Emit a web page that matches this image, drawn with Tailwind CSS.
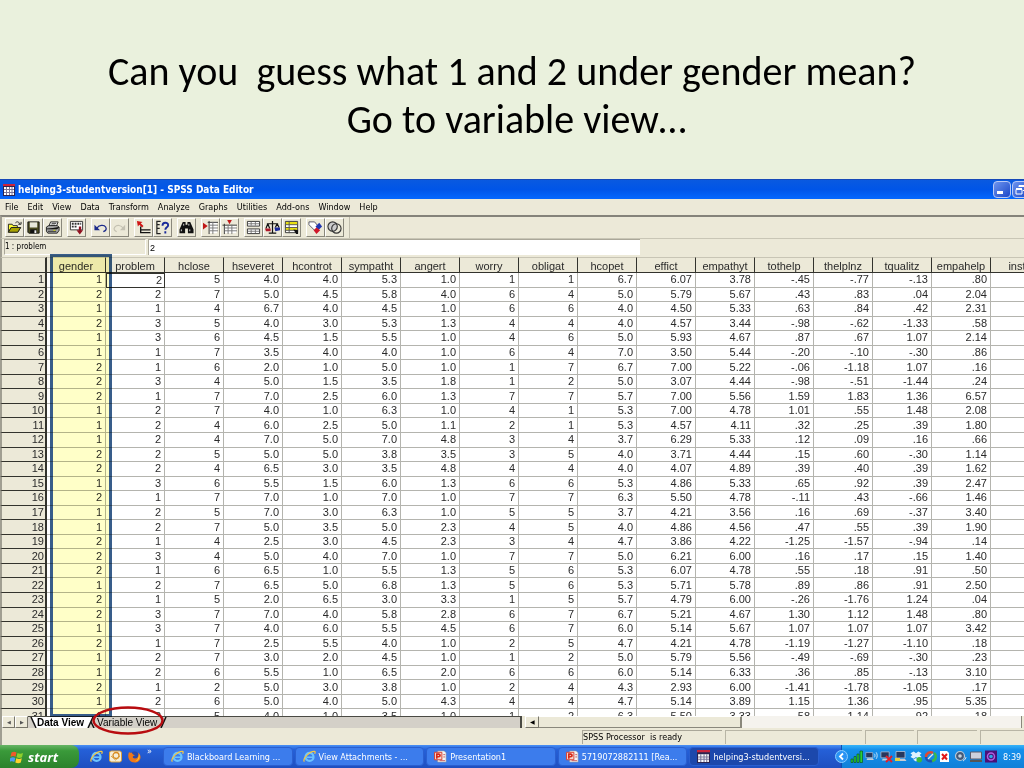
<!DOCTYPE html>
<html lang="en">
<head>
<meta charset="utf-8">
<title>SPSS Data Editor</title>
<script src="https://cdn.jsdelivr.net/npm/@tailwindcss/browser@4"></script>
</head>
<body class="bg-[#eaf1dd] min-h-screen flex flex-col overflow-hidden text-black font-['DejaVu_Sans_Condensed','DejaVu_Sans',sans-serif] text-[9px] leading-3">

<h1 class="h-[179px] pt-12 shrink-0 text-center text-[40px] leading-12 font-['Carlito','Lato',sans-serif] whitespace-pre">Can you  guess what 1 and 2 under gender mean?
 Go to variable view…</h1>

<main class="bg-[#ece9d8] flex flex-col flex-1">
  <header class="h-5 shrink-0 flex items-center pl-[3px] bg-linear-to-b from-[#0a5ae0] via-[#0055e8] to-[#0568ff] border-t border-[#1749b8] text-white font-bold text-[10px] overflow-hidden">
    <svg class="w-3 h-3 mr-[3px] shrink-0" viewBox="0 0 12 12"><path fill="#2b2350" d="M0 0h12v12H0z"/><path fill="#c9243c" d="M0 0h12v2H0z"/><path fill="#fff" d="M1 3h10v8H1z"/><path stroke="#7a7598" d="M1 5.500h10M1 8.500h10M3.500 3v8M6.500 3v8M9 3v8"/></svg>
    <span class="whitespace-nowrap">helping3-studentversion[1] - SPSS Data Editor</span>
    <div class="ml-auto -mr-[6px] flex gap-px shrink-0">
      <button aria-label="Minimize" class="w-[18px] h-[17px] rounded-sm border border-[#b9c9f5] bg-linear-to-br from-[#6e93ee] to-[#1c45c8] flex items-end p-[3px]"><span class="block w-[6px] h-[3px] bg-white"></span></button>
      <button aria-label="Restore" class="w-[18px] h-[17px] rounded-sm border border-[#b9c9f5] bg-linear-to-br from-[#6e93ee] to-[#1c45c8]"><svg class="w-4 h-[15px]" viewBox="0 0 16 15" fill="none" stroke="#fff"><path d="M6 5V3.500h6v5h-2M3 7.500h6v4.500H3zM3 6.500h6M6 4.500h6"/></svg></button>
    </div>
  </header>

  <nav class="h-4 shrink-0 flex items-center gap-[9px] pl-[5px]">
    <a href="#">File</a><a href="#">Edit</a><a href="#">View</a><a href="#">Data</a><a href="#">Transform</a><a href="#">Analyze</a><a href="#">Graphs</a><a href="#">Utilities</a><a href="#">Add-ons</a><a href="#">Window</a><a href="#">Help</a>
  </nav>

  <div id="tools" class="h-6 shrink-0 flex items-center gap-[5px] pl-[3px] border-t-2 border-b border-l-2 border-t-[#85837a] border-b-[#c9c6b6] border-l-[#a09e92]">
    <div class="flex">
      <button aria-label="Open"><svg viewBox="0 0 16 16"><path fill="#ff3" stroke="#222" d="M1.500 13V4.500h4l1 1.500H11v2M1.500 13l3-5h10l-3 5z"/><path fill="#a9a300" stroke="#222" d="M1.500 13l3-5h10l-3 5z"/><path fill="none" stroke="#222" d="M9 3c2-2 4-1 4.500 1.500M12 4.500h3V2"/></svg></button>
      <button aria-label="Save"><svg viewBox="0 0 16 16"><path fill="#4b4b20" stroke="#111" d="M2 2h12v12H3l-1-1z"/><path fill="#e8e8dc" d="M4 2.500h8V8H4z"/><path fill="#111" d="M4.500 10h7v4h-7z"/><path fill="#eee" d="M9 11h2v3H9z"/></svg></button>
      <button aria-label="Print"><svg viewBox="0 0 16 16"><path fill="#fff" stroke="#222" d="M4 7l2-5h8l-2 5z"/><path fill="#aaa" stroke="#222" d="M1.500 7.500L4 6h9l2 1.500V11l-2 3H3l-1.500-2z"/><path stroke="#222" d="M1.500 9.500H13l2-2M7 3.500h5M6 5.500h5M3 12h9"/><path stroke="#dd0" d="M9 11h2"/></svg></button>
    </div>
    <div class="flex">
      <button aria-label="Recall dialog"><svg viewBox="0 0 16 16"><path fill="#fff" stroke="#333" d="M1.500 1.500h13v9h-13z"/><path stroke="#333" stroke-width="2" stroke-dasharray="2 1" d="M3 4h10M3 7h6"/><path fill="#901020" d="M10.500 7h2.500v4h2l-3.500 4.500L8 11h2.500z"/></svg></button>
    </div>
    <div class="flex">
      <button aria-label="Undo"><svg viewBox="0 0 16 16"><path fill="none" stroke="#1c2a8a" stroke-width="1.400" d="M4 9c2-4 8-4 9.500-1.500s0 4-2.500 5"/><path fill="#1c2a8a" d="M1.500 5v6h6z"/></svg></button>
      <button aria-label="Redo"><svg viewBox="0 0 16 16"><path fill="none" stroke="#c4c1b2" stroke-width="1.200" d="M12 9C10 5 5 5 3 7.500s0 4 2 5"/><path fill="#c4c1b2" d="M14 5v6H8.500z"/></svg></button>
    </div>
    <div class="flex">
      <button aria-label="Go to case"><svg viewBox="0 0 16 16"><path fill="#d01515" d="M1 1l6 1-2 1.500 3 3-1.500 1.500-3-3L2 7z"/><path fill="none" stroke="#111" stroke-width="1.400" d="M5 7v6.500h10.500M5 10.500h10.500"/></svg></button>
      <button aria-label="Variables"><svg viewBox="0 0 16 16"><path fill="none" stroke="#222" stroke-width="1.300" d="M6 1.500H2v13h4M2 5h3M2 9h3"/><path fill="none" stroke="#1a2a9a" stroke-width="2" d="M8 6c0-4 6-4 6-.5 0 2.500-3 2-3 5M11 12v2.500"/></svg></button>
    </div>
    <div class="flex">
      <button aria-label="Find"><svg viewBox="0 0 16 16"><path fill="#111" d="M4 2h3v3h2V2h3l3.500 8v4H9.500V9h-3v5H.500v-4z"/><path stroke="#ddd" d="M2.500 10v2M11.500 10v2M5 4v2M10.500 4v2"/></svg></button>
    </div>
    <div class="flex">
      <button aria-label="Insert case"><svg viewBox="0 0 16 16"><path fill="#fff" d="M7 2h8v12H7z"/><path fill="none" stroke="#333" d="M6.500 1v14M5 2.500h11"/><path fill="none" stroke="#777" d="M7 5.500h9M7 8.500h9M7 11.500h9M10.500 2v13"/><path fill="#c01818" d="M0 3l5 3.500L0 10z"/></svg></button>
      <button aria-label="Insert variable"><svg viewBox="0 0 16 16"><path fill="#fff" d="M2 6h13v8H2z"/><path fill="none" stroke="#333" d="M.500 5.500H16M2.500 4v11"/><path fill="none" stroke="#777" d="M6.500 5v10M10.500 5v10M3 8.500h13M3 11.500h13"/><path fill="#c01818" d="M5.500 0h5L8 4.500z"/></svg></button>
    </div>
    <div class="flex">
      <button aria-label="Split file"><svg viewBox="0 0 16 16"><path fill="#fff" stroke="#333" d="M1.500 1.500h13v5h-13zM1.500 9.500h13v5h-13z"/><path stroke="#777" d="M5.500 2v4M10 2v4M5.500 10v4M10 10v4M2 4h12M2 12h12"/></svg></button>
      <button aria-label="Weight cases"><svg viewBox="0 0 16 16"><path fill="none" stroke="#111" stroke-width="1.300" d="M8 1v13M2 4h12M4 14h8M3 4L1 9M3 4l2 5M13 4l-2 4M13 4l2 4"/><path fill="#b01828" d="M0 9h6v3H1z"/><path fill="#1c2a9a" d="M10 8h6v3l-5 1z"/></svg></button>
      <button aria-label="Select cases"><svg viewBox="0 0 16 16"><path fill="#fff" stroke="#333" d="M1.500 1.500h13v12h-13z"/><path fill="#e8e010" d="M2 2h12v3H2zM2 8h12v3H2z"/><path stroke="#555" d="M5.500 1v13M1 5h14M1 8h14M1 11h14"/><path fill="#111" d="M10 10l5 1v4h-2z"/></svg></button>
    </div>
    <div class="flex">
      <button aria-label="Value labels"><svg viewBox="0 0 16 16"><path fill="#fff" stroke="#556" d="M1 2h6l5 6-4 4-7-7z"/><path fill="#2338b0" d="M8 7l4-4 3 4-4 4z"/><path fill="#d0182a" d="M6 11l3-3 4 3-4 4z"/></svg></button>
      <button aria-label="Use sets"><svg viewBox="0 0 16 16" fill="#ccc" stroke="#333" stroke-width="1.200"><circle cx="6" cy="7" r="5"/><circle cx="10" cy="9" r="5" fill="none"/></svg></button>
    </div>
    <div class="w-px self-stretch bg-[#c0bdad]"></div>
  </div>

  <div class="h-[18px] shrink-0 flex items-start pl-[2px] border-l-2 border-[#a09e92] text-[8px]">
    <label for="cell" class="w-[142px] h-4 pt-px border border-t-[#aaa799] border-l-[#aaa799] border-b-white border-r-white">1 : problem</label>
    <input id="cell" value="2" class="ml-[2px] w-[492px] h-4 bg-white border-t border-l border-[#aaa799] text-[9px] leading-3 pl-px font-['Liberation_Sans',sans-serif]">
  </div>

  <section class="relative shrink-0">
    <div class="h-[459px] overflow-hidden bg-white">
      <table class="table-fixed w-[1050px] h-[467px] border-separate border-spacing-0 font-['Liberation_Sans',sans-serif] text-[11px] leading-[13px] text-[#2a2a2a]">
        <thead><tr id="head"></tr></thead>
        <tbody id="rows"></tbody>
      </table>
    </div>
    <div class="absolute left-[50px] -top-[3px] bottom-[11px] w-[62px] border-3 border-[#385d8a] bg-[#ffffc8] mix-blend-multiply"></div>

    <div class="h-3 flex items-stretch text-[9px] font-['Liberation_Sans',sans-serif] border-l-2 border-[#a09e92]">
      <button aria-label="Previous sheet" class="w-[13px] border border-white border-r-[#77756a] border-b-[#77756a] text-[5px] leading-[9px] text-[#555]">◀</button>
      <button aria-label="Next sheet" class="w-[13px] border border-white border-r-[#77756a] border-b-[#77756a] text-[5px] leading-[9px] text-[#555]">▶</button>
      <div class="flex-none w-[494px] bg-[#d4d0c8] border-t border-r-2 border-[#4a4a44] flex leading-[11px]">
        <svg class="w-[9px] h-[11px] shrink-0" viewBox="0 0 9 11"><path fill="#fff" d="M3 0h6v11H7z"/><path stroke="#111" stroke-width="1.500" d="M3 0l5 11"/></svg>
        <button class="bg-white font-bold text-[10px] whitespace-nowrap">Data View</button>
        <svg class="w-[13px] h-[11px] shrink-0" viewBox="0 0 13 11"><path fill="#fff" d="M0 0h9L4 11H0z"/><path stroke="#111" stroke-width="1.500" d="M9 0L4 11M7 5l3 6"/></svg>
        <button class="text-[10px] whitespace-nowrap">Variable View</button>
        <svg class="w-3 h-[11px] shrink-0" viewBox="0 0 12 11"><path stroke="#111" stroke-width="1.500" d="M9 0L4 11"/></svg>
      </div>
      <button aria-label="Scroll left" class="ml-[3px] w-[14px] border border-white border-r-[#77756a] border-b-[#77756a] text-[6px] leading-[9px]">◀</button>
      <div class="w-[203px] border-t border-r-2 border-b border-t-white border-[#8a887c]"></div>
      <div class="flex-1 bg-[#f5f3ee]"></div>
      <div class="w-[3px] border-l border-[#8a887c]"></div>
    </div>
    <svg class="absolute left-[91px] top-[448px] w-[74px] h-[31px]" viewBox="0 0 74 31" fill="none"><ellipse cx="37" cy="15.500" rx="34.500" ry="13" stroke="#b80c10" stroke-width="2.500"/></svg>
  </section>

  <footer class="flex-1 pt-[2px] pb-px flex gap-[3px] border-l-2 border-[#a09e92] whitespace-pre">
    <div class="w-[577px]"></div>
    <div class="w-[140px] border-l border-t border-[#aaa799]">SPSS Processor  is ready</div>
    <div class="w-[137px] border-l border-t border-[#b8b5a5]"></div>
    <div class="w-[49px] border-l border-t border-[#b8b5a5]"></div>
    <div class="w-[60px] border-l border-t border-[#b8b5a5]"></div>
    <div class="flex-1 border-l border-t border-[#b8b5a5]"></div>
  </footer>
</main>

<svg class="hidden">
  <symbol id="ie" viewBox="0 0 14 14"><circle cx="7" cy="7.500" r="4.300" fill="none" stroke="#6cc4ff" stroke-width="2.400"/><path stroke="#6cc4ff" stroke-width="1.800" d="M4 7.800h7"/><path fill="none" stroke="#f5c842" stroke-width="1.300" d="M1.500 12.500C-1 10 7 1 12.500 1.500c1 .3.500 1.500 0 2.500"/></symbol>
  <symbol id="ppt" viewBox="0 0 14 14"><path fill="#f4f4f4" stroke="#999" stroke-width=".6" d="M4 1h7l2 2v10H4z"/><path stroke="#c55" d="M10 5h2M10 7.500h2M6 11.500h6"/><path fill="#f4d8d0" stroke="#d83a28" d="M.500 2.500h8v8h-8z"/><path fill="none" stroke="#d82818" stroke-width="1.800" d="M3 9.500v-5h2c2 0 2 2.800 0 2.800H3"/></symbol>
  <symbol id="spss" viewBox="0 0 12 12"><path fill="#2b2350" d="M0 0h12v12H0z"/><path fill="#c9243c" d="M0 0h12v2H0z"/><path fill="#fff" d="M1 4h10v7H1z"/><path stroke="#7a7598" d="M1 6.500h10M1 8.500h10M3.500 4v7M6.500 4v7M9 4v7"/></symbol>
  <symbol id="pc" viewBox="0 0 12 12"><path fill="#26385e" stroke="#b8c4d8" stroke-width=".8" d="M1 1.500h9v6.500H1z"/><path fill="#c8ccd4" d="M3 9h7l1.500 2H2z"/></symbol>
</svg>

<div class="h-[23px] shrink-0 flex items-stretch bg-linear-to-b from-[#4a90f5] via-[#2560d8] via-20% to-[#1e4fc0] text-white">
  <button class="w-[79px] shrink-0 rounded-r-lg bg-linear-to-b from-[#67b565] via-[#3a9a3a] via-25% to-[#2c822c] flex items-center pl-[10px] gap-1 font-bold italic text-[13px] font-['Open_Sans',sans-serif]">
    <svg class="w-[14px] h-[14px]" viewBox="0 0 14 14"><path fill="#f0592a" d="M1.500 2.500c2-1.300 3.500-1 5 0l-1 4.200c-1.500-.8-3-.9-5 0z"/><path fill="#8ed02c" d="M7.500 3c2 1 3.500 1 5.500 0l-1 4.200c-2 1-3.500.8-5.500 0z"/><path fill="#4a9af5" d="M.300 8c2-1 3.500-.8 5 0l-1 4c-1.500-1-3-1-5 0z"/><path fill="#fbd22c" d="M6.300 8.300c2 1 3.500 1 5.500 0l-1 4.200c-2 1-3.500.8-5.500 0z"/></svg>start
  </button>
  <div class="w-[84px] shrink-0 flex items-center pl-[11px] gap-[6px]">
    <svg class="w-[13px] h-[13px]"><use href="#ie"/></svg>
    <svg class="w-[13px] h-[13px]" viewBox="0 0 13 13"><rect x=".5" y="1" width="12" height="11" rx="2" fill="#f6eed8" stroke="#d8a040"/><circle cx="7" cy="5.500" r="3" fill="none" stroke="#d88a20" stroke-width="1.300"/><path fill="none" stroke="#d8a040" d="M2 6l4.500 4L11 6"/></svg>
    <svg class="w-[13px] h-[13px]" viewBox="0 0 13 13"><circle cx="6.500" cy="6.500" r="5" fill="#2a4aa8"/><path fill="#f07818" d="M1 2c1 1 2 1 3 .5 0 2 2 2 3 3-3 0-3 3 0 3s4-3 3-6c5 4 2 10-3.500 10S-1 7 1 2z"/><path fill="#fbc52c" d="M11 4c2 4-1 7.500-4.500 7.500 3-1 4.500-4 4.500-7.500z"/></svg>
    <span class="self-start">»</span>
  </div>
  <div id="tasks" class="flex-1 min-w-0 flex gap-[2px] py-[2px] pr-[22px]">
    <button class="bg-[#3c7cec]"><svg><use href="#ie"/></svg><span>Blackboard Learning ...</span></button>
    <button class="bg-[#3c7cec]"><svg><use href="#ie"/></svg><span>View Attachments - ...</span></button>
    <button class="bg-[#3c7cec]"><svg><use href="#ppt"/></svg><span>Presentation1</span></button>
    <button class="bg-[#3c7cec]"><svg><use href="#ppt"/></svg><span>5719072882111 [Rea...</span></button>
    <button class="bg-[#1c48ac]"><svg><use href="#spss"/></svg><span>helping3-studentversi...</span></button>
  </div>
  <div class="w-[183px] shrink-0 flex items-center gap-[2px] bg-linear-to-b from-[#36b4f8] via-[#1590ec] via-20% to-[#1180d8] border-l border-[#0d4fb0]">
    <svg class="w-[13px] h-[13px] -ml-[7px] shrink-0" viewBox="0 0 13 13"><circle cx="6.500" cy="6.500" r="6" fill="#2a94f4" stroke="#8accff"/><path fill="none" stroke="#fff" stroke-width="1.800" d="M8 3.500l-3 3 3 3"/></svg>
    <svg class="w-[13px] h-[13px] shrink-0" viewBox="0 0 13 13"><path fill="#28d038" stroke="#064a14" stroke-width=".6" d="M1 9h2v3.500H1zM4 6.500h2v6H4zM7 4h2v8.500H7zM10 1h2.500v11.500H10z"/></svg>
    <svg class="w-[13px] h-[13px] shrink-0" viewBox="0 0 14 12"><use href="#pc" width="10" height="11"/><path fill="none" stroke="#fff" stroke-width=".8" d="M10 3c1 1 1 3 0 4M12 1.500c1.500 2 1.500 5 0 7"/></svg>
    <svg class="w-[13px] h-[13px] shrink-0" viewBox="0 0 13 13"><use href="#pc" width="11" height="12"/><path stroke="#e0202c" stroke-width="2" d="M6 6l6 6M12 6l-6 6"/></svg>
    <svg class="w-[13px] h-[13px] shrink-0" viewBox="0 0 13 13"><use href="#pc" width="12" height="12"/><path fill="#e8d040" d="M0 8h5v3H0z"/></svg>
    <svg class="w-[12px] h-[13px] shrink-0" viewBox="0 0 13 13"><path fill="#dff2ff" d="M4 1l2.500 2L9 1l3.500 2-2 2 2 2L9 9 6.500 7 4 9 .500 7l2-2-2-2zM3.500 10l3-2 3 2-3 2z"/><circle cx="10" cy="10" r="3" fill="#3cb83c"/></svg>
    <svg class="w-[13px] h-[13px] shrink-0" viewBox="0 0 13 13" fill="none" stroke-width="2.500"><path stroke="#e04a30" d="M2 7a4.500 4.500 0 0 1 7-4"/><path stroke="#3cb848" d="M10 3a4.500 4.500 0 0 1-2 8"/><path stroke="#2050b0" d="M8 11a4.500 4.500 0 0 1-6-4"/><path stroke="#e8e8e8" stroke-width="1.200" d="M4 9l5-5"/></svg>
    <svg class="w-[11px] h-[13px] shrink-0" viewBox="0 0 11 13"><path fill="#fff" d="M1 1h7l2 2v9H1z"/><path stroke="#e01818" stroke-width="2" d="M3 4l5 5.500M8 4L3 9.500"/></svg>
    <svg class="w-[13px] h-[13px] ml-[2px] shrink-0" viewBox="0 0 13 13"><circle cx="6" cy="6" r="4.500" fill="#445a78" stroke="#b8c8d8" stroke-width="1.200"/><circle cx="6" cy="6" r="1.800" fill="#c8d4e0"/><path fill="none" stroke="#d8e0e8" d="M9 11c2-1 3-3 3-4"/></svg>
    <svg class="w-[14px] h-[13px] shrink-0" viewBox="0 0 14 13"><path fill="#ccd0dc" stroke="#5a5a6a" d="M1.500 2h11v7h-11z"/><path fill="#555" d="M1 10h12v2H1z"/></svg>
    <svg class="w-[12px] h-[13px] shrink-0" viewBox="0 0 12 13"><path fill="#4a1078" d="M0 .500h12v12H0z"/><circle cx="6" cy="6.500" r="3.500" fill="none" stroke="#b060e0" stroke-width="1.500"/><circle cx="6" cy="6.500" r="1.800" fill="#30a8e8"/></svg>
    <time class="ml-[4px]">8:39</time>
  </div>
</div>

<script>
document.querySelectorAll('#tools button').forEach(b => {
  b.className = 'w-[19px] h-[19px] p-px border border-white border-r-[#8a887c] border-b-[#8a887c]';
  b.firstElementChild.setAttribute('class', 'w-[15px] h-[15px]');
});
document.querySelectorAll('#tasks button').forEach(b => {
  b.className += ' flex-1 min-w-0 flex items-center gap-[3px] pl-[7px] rounded-sm border border-[#2a5fd0] whitespace-nowrap overflow-hidden';
  b.firstElementChild.setAttribute('class', 'w-[13px] h-[13px] shrink-0');
});
const names = 'gender problem hclose hseveret hcontrot sympatht angert worry obligat hcopet effict empathyt tothelp thelplnz tqualitz empahelp insth'.split(' ');
const data = `1 2 5 4.0 4.0 5.3 1.0 1 1 6.7 6.07 3.78 -.45 -.77 -.13 .80
2 2 7 5.0 4.5 5.8 4.0 6 4 5.0 5.79 5.67 .43 .83 .04 2.04
1 1 4 6.7 4.0 4.5 1.0 6 6 4.0 4.50 5.33 .63 .84 .42 2.31
2 3 5 4.0 3.0 5.3 1.3 4 4 4.0 4.57 3.44 -.98 -.62 -1.33 .58
1 3 6 4.5 1.5 5.5 1.0 4 6 5.0 5.93 4.67 .87 .67 1.07 2.14
1 1 7 3.5 4.0 4.0 1.0 6 4 7.0 3.50 5.44 -.20 -.10 -.30 .86
2 1 6 2.0 1.0 5.0 1.0 1 7 6.7 7.00 5.22 -.06 -1.18 1.07 .16
2 3 4 5.0 1.5 3.5 1.8 1 2 5.0 3.07 4.44 -.98 -.51 -1.44 .24
2 1 7 7.0 2.5 6.0 1.3 7 7 5.7 7.00 5.56 1.59 1.83 1.36 6.57
1 2 7 4.0 1.0 6.3 1.0 4 1 5.3 7.00 4.78 1.01 .55 1.48 2.08
1 2 4 6.0 2.5 5.0 1.1 2 1 5.3 4.57 4.11 .32 .25 .39 1.80
1 2 4 7.0 5.0 7.0 4.8 3 4 3.7 6.29 5.33 .12 .09 .16 .66
2 2 5 5.0 5.0 3.8 3.5 3 5 4.0 3.71 4.44 .15 .60 -.30 1.14
2 2 4 6.5 3.0 3.5 4.8 4 4 4.0 4.07 4.89 .39 .40 .39 1.62
1 3 6 5.5 1.5 6.0 1.3 6 6 5.3 4.86 5.33 .65 .92 .39 2.47
2 1 7 7.0 1.0 7.0 1.0 7 7 6.3 5.50 4.78 -.11 .43 -.66 1.46
1 2 5 7.0 3.0 6.3 1.0 5 5 3.7 4.21 3.56 .16 .69 -.37 3.40
1 2 7 5.0 3.5 5.0 2.3 4 5 4.0 4.86 4.56 .47 .55 .39 1.90
2 1 4 2.5 3.0 4.5 2.3 3 4 4.7 3.86 4.22 -1.25 -1.57 -.94 .14
2 3 4 5.0 4.0 7.0 1.0 7 7 5.0 6.21 6.00 .16 .17 .15 1.40
2 1 6 6.5 1.0 5.5 1.3 5 6 5.3 6.07 4.78 .55 .18 .91 .50
1 2 7 6.5 5.0 6.8 1.3 5 6 5.3 5.71 5.78 .89 .86 .91 2.50
2 1 5 2.0 6.5 3.0 3.3 1 5 5.7 4.79 6.00 -.26 -1.76 1.24 .04
2 3 7 7.0 4.0 5.8 2.8 6 7 6.7 5.21 4.67 1.30 1.12 1.48 .80
1 3 7 4.0 6.0 5.5 4.5 6 7 6.0 5.14 5.67 1.07 1.07 1.07 3.42
2 1 7 2.5 5.5 4.0 1.0 2 5 4.7 4.21 4.78 -1.19 -1.27 -1.10 .18
1 2 7 3.0 2.0 4.5 1.0 1 2 5.0 5.79 5.56 -.49 -.69 -.30 .23
1 2 6 5.5 1.0 6.5 2.0 6 6 6.0 5.14 6.33 .36 .85 -.13 3.10
2 1 2 5.0 3.0 3.8 1.0 2 4 4.3 2.93 6.00 -1.41 -1.78 -1.05 .17
1 2 6 5.0 4.0 5.0 4.3 4 4 4.7 5.14 3.89 1.15 1.36 .95 5.35
1 2 5 4.0 1.0 3.5 1.0 1 2 6.3 5.50 3.33 .58 1.14 .92 .18`.split('\n').map(r => r.split(' '));
document.getElementById('head').innerHTML =
  '<th class="w-[47px] p-0 bg-[#ece9d8] border-l-2 border-l-[#a09e92] border-t border-t-[#c8c5b5] border-r-2 border-r-[#33332d] border-b border-b-[#33332d]"></th>' +
  names.map(n => '<th scope="col" class="w-[59px] p-0 pt-[2px] leading-[12px] bg-[#ece9d8] font-normal text-center border-t border-t-[#c8c5b5] border-r border-r-[#33332d] border-b border-b-[#33332d]">' + n + '</th>').join('');
document.getElementById('rows').innerHTML = data.map((r, i) =>
  '<tr><th scope="row" class="p-0 pr-px bg-[#ece9d8] font-normal text-right border-l-2 border-l-[#a09e92] border-r-2 border-r-[#33332d] border-b border-b-[#33332d]">' + (i + 1) + '</th>' +
  r.concat('').map((v, j) => '<td class="' + (i === 0 && j === 1
    ? 'p-0 pr-[2px] leading-[12px] text-right border border-[#33332d]'
    : 'p-0 pr-[3px] text-right border-r border-b border-[#b4b4ae]') + '">' + v + '</td>').join('') + '</tr>').join('');
</script>
</body>
</html>
